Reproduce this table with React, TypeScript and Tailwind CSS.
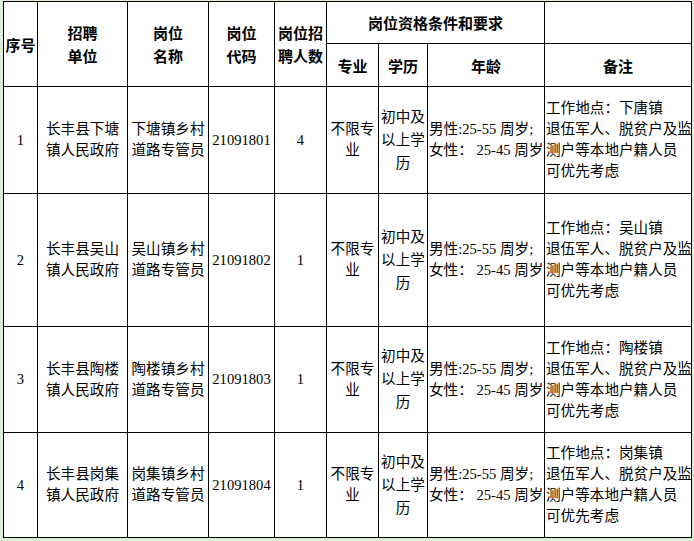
const rows = [
  { no: "1", town: "下塘", code: "21091801", count: "4", place: "下唐镇" },
  { no: "2", town: "吴山", code: "21091802", count: "1", place: "吴山镇" },
  { no: "3", town: "陶楼", code: "21091803", count: "1", place: "陶楼镇" },
  { no: "4", town: "岗集", code: "21091804", count: "1", place: "岗集镇" },
]

const cell = "bg-white flex flex-col items-center justify-center text-center"
const head = cell + " font-bold text-[15px] leading-[23px] whitespace-nowrap"
const body = cell + " text-[14.6px] leading-[21px] whitespace-nowrap"

export default function App() {
  return (
    <div
      className="w-[694px] h-[541px] bg-[#dbefd6] pl-[3px] pt-px text-black"
      style={{ fontFamily: '"Liberation Serif", "Noto Sans CJK SC", serif' }}
    >
      <div className="grid w-[689px] grid-cols-[33px_89px_80px_65px_51px_51px_48px_116px_146px] grid-rows-[41px_42px_106px_132px_105px_104px] gap-px border border-black bg-black">
        <div className={head + " row-span-2"} style={{ fontFamily: '"Noto Sans CJK SC", sans-serif' }}>序号</div>
        <div className={head + " row-span-2"} style={{ fontFamily: '"Noto Sans CJK SC", sans-serif' }}>
          <span>招聘</span>
          <span>单位</span>
        </div>
        <div className={head + " row-span-2"} style={{ fontFamily: '"Noto Sans CJK SC", sans-serif' }}>
          <span>岗位</span>
          <span>名称</span>
        </div>
        <div className={head + " row-span-2"} style={{ fontFamily: '"Noto Sans CJK SC", sans-serif' }}>
          <span>岗位</span>
          <span>代码</span>
        </div>
        <div className={head + " row-span-2"} style={{ fontFamily: '"Noto Sans CJK SC", sans-serif' }}>
          <span>岗位招</span>
          <span>聘人数</span>
        </div>
        <div className={head + " col-span-3"} style={{ fontFamily: '"Noto Sans CJK SC", sans-serif' }}>岗位资格条件和要求</div>
        <div className="bg-white" />
        <div className={head} style={{ fontFamily: '"Noto Sans CJK SC", sans-serif' }}>专业</div>
        <div className={head} style={{ fontFamily: '"Noto Sans CJK SC", sans-serif' }}>学历</div>
        <div className={head} style={{ fontFamily: '"Noto Sans CJK SC", sans-serif' }}>年龄</div>
        <div className={head} style={{ fontFamily: '"Noto Sans CJK SC", sans-serif' }}>备注</div>

        {rows.map((r) => (
          <Row key={r.no} {...r} />
        ))}
      </div>
    </div>
  )
}

function Row({ no, town, code, count, place }: { no: string; town: string; code: string; count: string; place: string }) {
  return (
    <>
      <div className={body}>{no}</div>
      <div className={body}>
        <span>长丰县{town}</span>
        <span>镇人民政府</span>
      </div>
      <div className={body}>
        <span>{town}镇乡村</span>
        <span>道路专管员</span>
      </div>
      <div className={body}>{code}</div>
      <div className={body}>{count}</div>
      <div className={body}>
        <span>不限专</span>
        <span>业</span>
      </div>
      <div className={body + " leading-[23px]"}>
        <span>初中及</span>
        <span>以上学</span>
        <span>历</span>
      </div>
      <div className={body + " items-start pl-px text-left"}>
        <span>男性:25-55 周岁;</span>
        <span>女性： 25-45 周岁</span>
      </div>
      <div className={body + " items-start pl-px text-left"}>
        <span>工作地点：{place}</span>
        <span>退伍军人、脱贫户及监</span>
        <span>测户等本地户籍人员</span>
        <span>可优先考虑</span>
      </div>
    </>
  )
}
